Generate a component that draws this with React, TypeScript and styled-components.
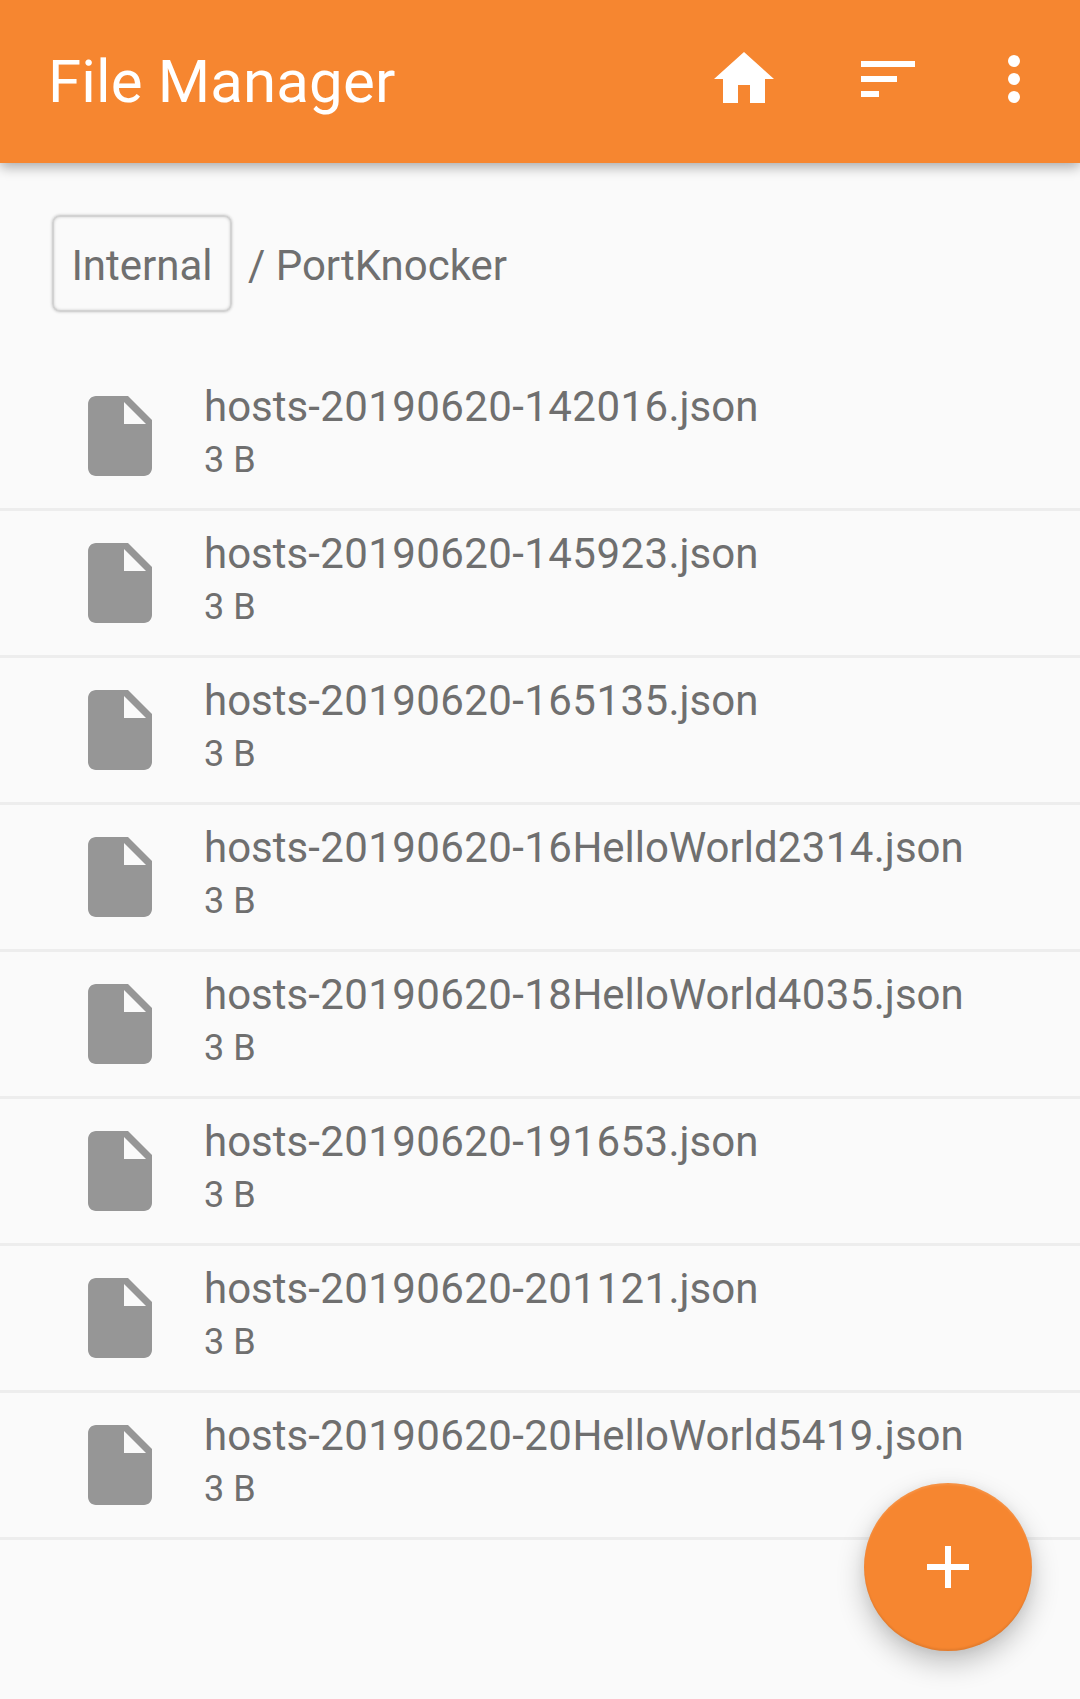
import React from "react";
import styled, { createGlobalStyle } from "styled-components";

const ORANGE = "#f68630";

const GlobalStyle = createGlobalStyle`
  *, *::before, *::after { box-sizing: border-box; }
  body {
    margin: 0;
    background: #fafafa;
    font-family: Roboto, "Liberation Sans", sans-serif;
    color: #6f6f6f;
  }
  button {
    border: 0;
    padding: 0;
    background: none;
    color: inherit;
    font: inherit;
    cursor: pointer;
  }
`;

const Screen = styled.div`
  position: relative;
  display: flex;
  flex-direction: column;
  width: 1080px;
  height: 1699px;
  overflow: hidden;
  background: #fafafa;
`;

const AppBar = styled.header`
  display: flex;
  align-items: center;
  flex: none;
  height: 163px;
  padding: 0 30px 5px 48px;
  background: ${ORANGE};
  color: #fff;
  box-shadow: 0 4px 12px rgba(0, 0, 0, 0.33);
`;

const Title = styled.h1`
  flex: 1;
  margin: 0;
  padding-top: 5px;
  font-size: 60px;
  line-height: 70px;
  font-weight: 400;
  letter-spacing: 0.14px;
  white-space: nowrap;
`;

const Actions = styled.div`
  display: flex;
`;

const Action = styled.button<{ $gap?: number }>`
  display: flex;
  margin-left: ${({ $gap = 0 }) => $gap}px;
`;

const Icon = styled.svg<{ $size?: number }>`
  display: block;
  flex: none;
  width: ${({ $size = 72 }) => $size}px;
  height: ${({ $size = 72 }) => $size}px;
  fill: currentColor;
`;

const Breadcrumbs = styled.nav`
  display: flex;
  align-items: center;
  height: 201px;
  padding: 0 52px;
  font-size: 42px;
  line-height: 50px;
  white-space: pre;
`;

const Crumb = styled.button`
  width: 180px;
  height: 97px;
  margin-right: 16px;
  padding-top: 4px;
  border: 2px solid #d2d2d2;
  border-radius: 8px;
  box-shadow: 0 0 3px rgba(0, 0, 0, 0.22), inset 0 0 3px rgba(0, 0, 0, 0.18);
`;

const Path = styled.span`
  padding-top: 4px;
  letter-spacing: -0.03px;
`;

const FileList = styled.ul`
  margin: 0;
  padding: 0;
  list-style: none;
`;

const FileRow = styled.li`
  display: flex;
  align-items: center;
  height: 147px;
  padding: 0 72px;
  border-bottom: 3px solid #ededed;
`;

const FileIcon = styled(Icon)`
  color: #969696;
`;

const FileInfo = styled.div`
  display: flex;
  flex-direction: column;
  margin-left: 36px;
  padding-bottom: 8px;
  white-space: nowrap;
`;

const FileName = styled.span`
  font-size: 42px;
  line-height: 56px;
`;

const Digits = styled.span`
  letter-spacing: 0.41px;
`;

const FileSize = styled.span`
  font-size: 36px;
  line-height: 50px;
`;

const Fab = styled.button`
  position: absolute;
  right: 48px;
  bottom: 48px;
  display: flex;
  align-items: center;
  justify-content: center;
  width: 168px;
  height: 168px;
  border-radius: 50%;
  background: ${ORANGE};
  color: #fff;
  box-shadow: 0 12px 28px rgba(0, 0, 0, 0.23), 0 2px 12px rgba(0, 0, 0, 0.06),
    inset 0 -2px 2px rgba(0, 0, 0, 0.08), inset 0 2px 2px rgba(255, 255, 255, 0.1);
`;

const files = [
  "hosts-20190620-142016.json",
  "hosts-20190620-145923.json",
  "hosts-20190620-165135.json",
  "hosts-20190620-16HelloWorld2314.json",
  "hosts-20190620-18HelloWorld4035.json",
  "hosts-20190620-191653.json",
  "hosts-20190620-201121.json",
  "hosts-20190620-20HelloWorld5419.json",
];

// Runs of digits and hyphens are set slightly wider than the letters.
const spaced = (name: string) =>
  name
    .split(/([\d-]+)/)
    .map((part, i) => (i % 2 ? <Digits key={i}>{part}</Digits> : part));

export default function App() {
  return (
    <>
      <GlobalStyle />
      <Screen>
        <AppBar>
          <Title>File Manager</Title>
          <Actions>
            <Action aria-label="Home">
              <Icon viewBox="0 0 24 24">
                <path d="M10 20v-6h4v6h5v-8h3L12 3 2 12h3v8z" />
              </Icon>
            </Action>
            <Action aria-label="Sort" $gap={72}>
              <Icon viewBox="0 0 24 24">
                <path d="M3 18h6v-2H3v2zM3 6v2h18V6H3zm0 7h12v-2H3v2z" />
              </Icon>
            </Action>
            <Action aria-label="More" $gap={54}>
              <Icon viewBox="0 0 24 24">
                <circle cx="12" cy="6" r="2" />
                <circle cx="12" cy="12" r="2" />
                <circle cx="12" cy="18" r="2" />
              </Icon>
            </Action>
          </Actions>
        </AppBar>
        <Breadcrumbs>
          <Crumb>Internal</Crumb>
          <Path>/ PortKnocker</Path>
        </Breadcrumbs>
        <FileList>
          {files.map((name) => (
            <FileRow key={name}>
              <FileIcon $size={96} viewBox="0 0 24 24">
                <path d="M6 2c-1.1 0-1.99.9-1.99 2L4 20c0 1.1.89 2 1.99 2H18c1.1 0 2-.9 2-2V8l-6-6H6zm7 7V3.5L18.5 9H13z" />
              </FileIcon>
              <FileInfo>
                <FileName>{spaced(name)}</FileName>
                <FileSize>3 B</FileSize>
              </FileInfo>
            </FileRow>
          ))}
        </FileList>
        <Fab aria-label="Add">
          <Icon viewBox="0 0 24 24">
            <path d="M19 13h-6v6h-2v-6H5v-2h6V5h2v6h6v2z" />
          </Icon>
        </Fab>
      </Screen>
    </>
  );
}
